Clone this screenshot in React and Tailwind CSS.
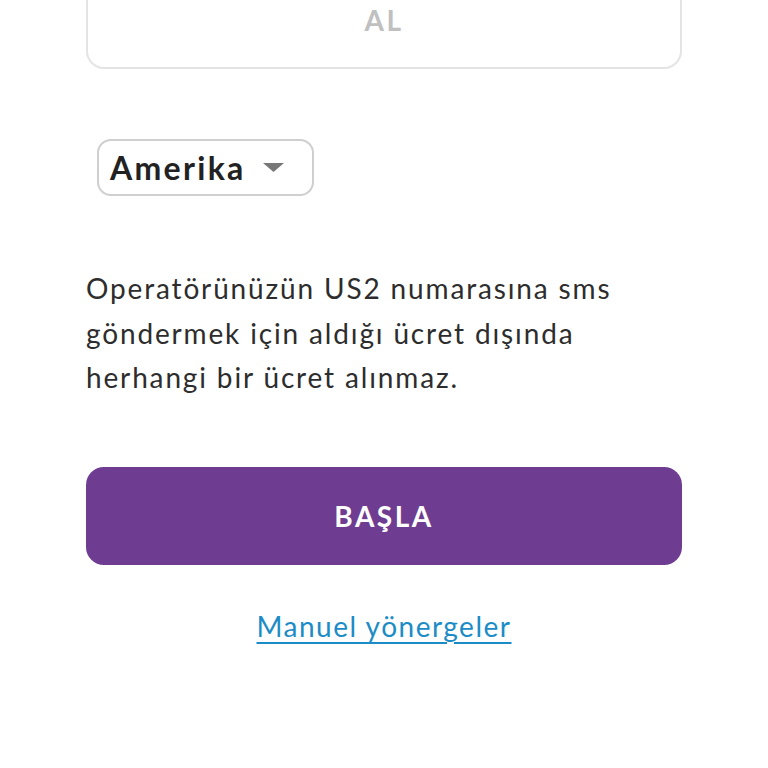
import React from 'react';

const App = () => {
  return (
    <div className="min-h-[768px] w-full bg-white" style={{ fontFamily: 'Lato, "Noto Sans", sans-serif' }}>
      <div className="mx-[86px] flex flex-col">
        {/* Top card, scrolled partly off screen */}
        <div className="-mt-[30px] flex h-[99px] items-center justify-center rounded-[18px] border-2 border-[#e4e4e4]">
          <span className="text-[28px] font-bold tracking-[2.5px] text-[#c0c0c0]">AL</span>
        </div>

        {/* Country select */}
        <div className="mt-[70px] ml-[11px]">
          <button className="flex h-[57px] w-[217px] items-center rounded-[14px] border-2 border-[#cfcfcf] pl-[11px] pr-[28px]">
            <span className="text-[32px] font-bold leading-none tracking-[2.3px] text-[#222]">Amerika</span>
            <svg className="ml-auto" width="21" height="9" viewBox="0 0 21 9">
              <path d="M0 0 H21 L10.5 9 Z" fill="#777" />
            </svg>
          </button>
        </div>

        {/* Info text */}
        <p className="mt-[70px] text-[28px] leading-[44.5px] tracking-[1.85px] text-[#2d2d2d]">
          Operatörünüzün US2 numarasına sms göndermek için aldığı ücret dışında herhangi bir ücret alınmaz.
        </p>

        {/* Start button */}
        <button className="mt-[67px] flex h-[98px] w-full items-center justify-center rounded-[18px] bg-[#6e3c90]">
          <span className="text-[28px] font-bold tracking-[2.5px] text-white">BAŞLA</span>
        </button>

        {/* Manual link */}
        <div className="mt-[40px] flex justify-center">
          <a href="#" className="text-[28px] tracking-[1.5px] text-[#1b8cc6] underline decoration-[2px] underline-offset-[5px]">
            Manuel yönergeler
          </a>
        </div>
      </div>
    </div>
  );
};

export default App;
